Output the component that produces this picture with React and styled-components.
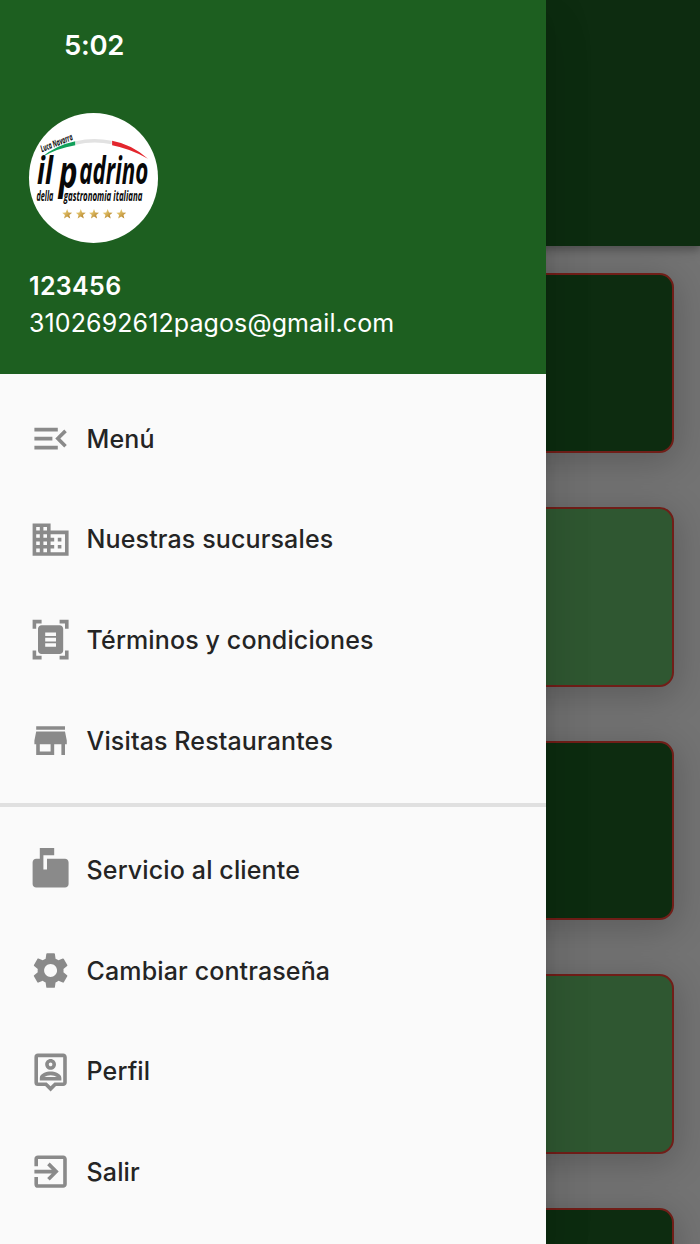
import React from "react"
import styled, { createGlobalStyle } from "styled-components"
import {
  MdBusiness,
  MdDocumentScanner,
  MdExitToApp,
  MdMarkunreadMailbox,
  MdMenuOpen,
  MdOutlinePersonPin,
  MdSettings,
  MdStore,
} from "react-icons/md"

const mainLinks = [
  { label: "Menú", icon: MdMenuOpen },
  { label: "Nuestras sucursales", icon: MdBusiness },
  { label: "Términos y condiciones", icon: MdDocumentScanner },
  { label: "Visitas Restaurantes", icon: MdStore },
]

const accountLinks = [
  { label: "Servicio al cliente", icon: MdMarkunreadMailbox },
  { label: "Cambiar contraseña", icon: MdSettings },
  { label: "Perfil", icon: MdOutlinePersonPin },
  { label: "Salir", icon: MdExitToApp },
]

const cards = ["dark", "light", "dark", "light", "dark"]

const starPath =
  "M0 -5 L1.4 -1.6 L5 -1.4 L2.2 0.9 L3.1 4.5 L0 2.5 L-3.1 4.5 L-2.2 0.9 L-5 -1.4 L-1.4 -1.6 Z"

const Logo = () => (
  <LogoSvg viewBox="0 0 130 130" role="img" aria-label="il padrino">
    <defs>
      <linearGradient id="gold" x1="0" x2="1" y1="0" y2="1">
        <stop offset="0.2" stopColor="#ecd07a" />
        <stop offset="0.8" stopColor="#b9892f" />
      </linearGradient>
    </defs>
    <path d="M12 45 Q27 32.5 46.5 28.5 V32.5 Q28 35.5 12 45Z" fill="#12a05a" />
    <path d="M47 28.3 Q65 24 83 28 V31.5 Q65 27.5 47 32Z" fill="#e2e2e2" />
    <path d="M83.5 28 Q103 31.5 119.5 46 Q102 36 83.5 32.5Z" fill="#e3262d" />
    <LogoText
      size="9.5"
      textLength="34"
      lengthAdjust="spacingAndGlyphs"
      transform="translate(13 39.5) rotate(-22)"
    >
      Luca Navarra
    </LogoText>
    <LogoText x="8" y="71" size="38" textLength="16" lengthAdjust="spacingAndGlyphs">
      il
    </LogoText>
    <LogoText x="30" y="75" size="45" textLength="19" lengthAdjust="spacingAndGlyphs">
      p
    </LogoText>
    <LogoText x="50.5" y="71" size="38" textLength="69.5" lengthAdjust="spacingAndGlyphs">
      adrino
    </LogoText>
    <LogoText x="7.5" y="88.5" size="13.5" textLength="17" lengthAdjust="spacingAndGlyphs">
      della
    </LogoText>
    <LogoText x="35" y="88.5" size="13.5" textLength="79" lengthAdjust="spacingAndGlyphs">
      gastronomia italiana
    </LogoText>
    {[38.3, 52, 65.3, 79, 92.7].map(x => (
      <path key={x} d={starPath} transform={`translate(${x} 101.5)`} fill="url(#gold)" />
    ))}
  </LogoSvg>
)

const NavList = ({ links }) => (
  <List>
    {links.map(({ label, icon: Icon }) => (
      <ListItem key={label}>
        <Icon />
        <Label>{label}</Label>
      </ListItem>
    ))}
  </List>
)

const App = () => (
  <Screen>
    <GlobalStyle />
    <Page>
      <AppBar />
      <CardList>
        {cards.map((tone, i) => (
          <Card key={i} $tone={tone} />
        ))}
      </CardList>
    </Page>
    <Scrim />
    <Drawer>
      <DrawerHeader>
        <Clock>5:02</Clock>
        <Avatar>
          <Logo />
        </Avatar>
        <UserName>123456</UserName>
        <UserEmail>3102692612pagos@gmail.com</UserEmail>
      </DrawerHeader>
      <Nav>
        <NavList links={mainLinks} />
        <Divider />
        <NavList links={accountLinks} />
      </Nav>
    </Drawer>
  </Screen>
)

const GlobalStyle = createGlobalStyle`
  body {
    margin: 0;
    font-family: Inter, Roboto, sans-serif;
  }
`

const Screen = styled.div`
  position: relative;
  width: 700px;
  height: 1244px;
  overflow: hidden;
`

const Page = styled.main`
  height: 100%;
  background-color: #fafafa;
`

const AppBar = styled.header`
  position: relative;
  height: 246px;
  background-color: #1d6023;
  box-shadow: 0 3.6px 7px rgba(0, 0, 0, 0.2), 0 7px 9px rgba(0, 0, 0, 0.08),
    0 1.8px 18px rgba(0, 0, 0, 0.08);
`

const CardList = styled.div`
  display: flex;
  flex-direction: column;
  gap: 54px;
  padding: 27.4px 26px 0 27px;
`

const Card = styled.div`
  flex: none;
  box-sizing: border-box;
  height: 179.7px;
  border: 2px solid #f44336;
  border-radius: 14.4px;
  background-color: ${({ $tone }) => ($tone === "dark" ? "#1d6023" : "#68bd6c")};
  box-shadow: 0 7px 36px 3px rgba(0, 0, 0, 0.2);
`

const Scrim = styled.div`
  position: absolute;
  inset: 0;
  background-color: rgba(0, 0, 0, 0.54);
`

const Drawer = styled.aside`
  position: absolute;
  top: 0;
  bottom: 0;
  left: 0;
  width: 546.4px;
  background-color: #fafafa;
  box-shadow: 0 14px 18px -9px rgba(0, 0, 0, 0.2),
    0 29px 43px 4px rgba(0, 0, 0, 0.09), 0 11px 54px 9px rgba(0, 0, 0, 0.04);
`

const DrawerHeader = styled.div`
  display: flex;
  flex-direction: column;
  box-sizing: border-box;
  height: 374px;
  padding: 28px 29px 0;
  color: #fff;
  background-color: #1d5f20;
`

const Clock = styled.time`
  height: 85.4px;
  margin-left: 35px;
  font-size: 27.5px;
  font-weight: 600;
  line-height: 35px;
  letter-spacing: -0.3px;
`

const Avatar = styled.div`
  flex: none;
  width: 129.4px;
  height: 129.4px;
  border-radius: 50%;
  overflow: hidden;
  background-color: #fff;
`

const LogoSvg = styled.svg`
  display: block;
  width: 100%;
  height: 100%;
`

const LogoText = styled.text`
  font-family: "Open Sans", sans-serif;
  font-size: ${({ size }) => size}px;
  font-style: italic;
  font-weight: 700;
  fill: #080808;
`

const UserName = styled.strong`
  margin-top: 24.4px;
  font-size: 25px;
  font-weight: 600;
  line-height: 38px;
  letter-spacing: 0.35px;
`

const UserEmail = styled.span`
  font-size: 25px;
  line-height: 37px;
  letter-spacing: 0.1px;
`

const Nav = styled.nav`
  padding-top: 14.3px;
`

const List = styled.ul`
  margin: 0;
  padding: 0;
  list-style: none;
`

const ListItem = styled.li`
  display: flex;
  align-items: center;
  height: 100.65px;
  padding-left: 28.6px;

  svg {
    flex: none;
    width: 43.2px;
    height: 43.2px;
    color: #8a8a8a;
  }
`

const Label = styled.span`
  margin-left: 14.8px;
  color: #242424;
  font-size: 25px;
  font-weight: 500;
  line-height: 36px;
  letter-spacing: 0.13px;
`

const Divider = styled.hr`
  height: 4px;
  margin: 12.5px 0 12.2px;
  border: 0;
  background-color: #e0e0e0;
`

export default App
